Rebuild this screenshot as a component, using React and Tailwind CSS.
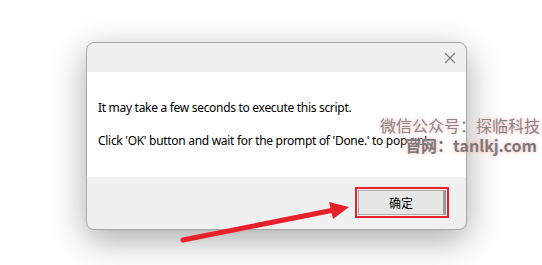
export default function App() {
  return (
    <div className="relative w-[542px] h-[265px] overflow-hidden bg-white" style={{ fontFamily: '"Noto Sans", "Segoe UI", sans-serif' }}>
      <div className="pt-[42px] pl-[86px]">
        <div className="w-[381px] h-[188px] rounded-[8px] border border-[#a8a8a8] bg-[#f0f0f0] overflow-hidden flex flex-col shadow-[0_10px_34px_rgba(0,0,0,0.34)]">
          <div className="h-[29px] flex justify-end items-center pr-[10px] shrink-0">
            <svg width="12" height="12" viewBox="0 0 12 12" className="mt-[1px]">
              <path d="M1 1 L11 11 M11 1 L1 11" stroke="#7a7a7a" strokeWidth="1.1" fill="none" />
            </svg>
          </div>
          <div className="h-[105px] bg-white shrink-0 pl-[11px] pt-[28px] text-[12px] leading-[16px] text-black tracking-[-0.3px]">
            <p>It may take a few seconds to execute this script.</p>
            <p className="mt-[17px]">Click 'OK' button and wait for the prompt of 'Done.' to pop up!</p>
          </div>
          <div className="flex-1 flex justify-end items-start pt-[10px] pr-[17px]">
            <div className="border-2 border-[#e8222c] p-[1px]">
              <button className="w-[88px] h-[25px] bg-[#e6e6e6] border border-[#adadad] border-r-[3px] border-r-[#9a9a9a] text-[12px] text-black flex items-center justify-center" style={{ fontFamily: '"Noto Sans CJK SC", sans-serif' }}>
                确定
              </button>
            </div>
          </div>
        </div>
      </div>

      <div className="absolute right-[2px] top-[115px] flex flex-col items-end text-[#888888] text-[16px] leading-[20px] whitespace-nowrap" style={{ fontFamily: '"Noto Sans CJK SC", sans-serif', textShadow: '0 0 3px rgba(255,185,185,0.8), 0 0 6px rgba(255,210,210,0.7)' }}>
        <div>微信公众号：探临科技</div>
        <div className="font-bold text-[#7a7a7a] mr-[3px]">官网：tanlkj.com</div>
      </div>

      <svg className="absolute left-0 top-0" width="542" height="265" viewBox="0 0 542 265">
        <line x1="183" y1="240" x2="334" y2="210" stroke="#e8202a" strokeWidth="5" strokeLinecap="round" />
        <polygon points="349,207 329,202 333,219" fill="#e8202a" />
      </svg>
    </div>
  );
}
